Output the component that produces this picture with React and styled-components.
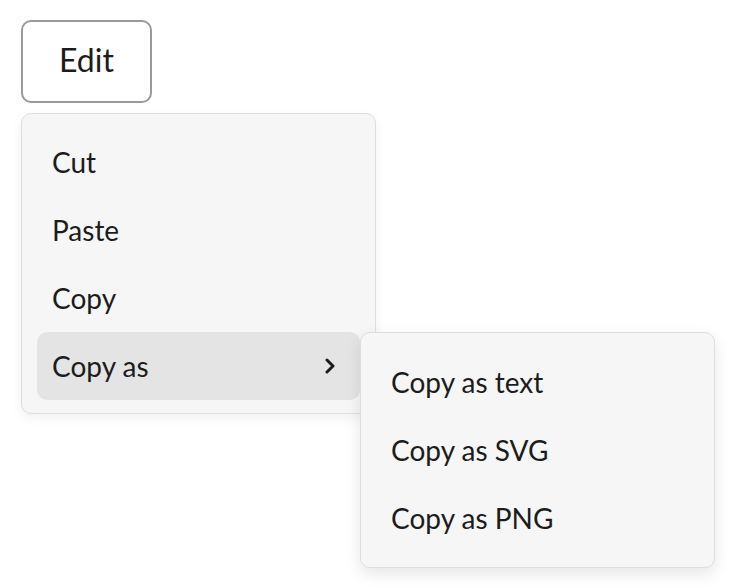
import styled, { createGlobalStyle } from "styled-components";

const GlobalStyle = createGlobalStyle`
  html, body, #root {
    min-height: 100%;
    height: 100%;
  }
  body {
    margin: 0;
    background: #fff;
    font-family: "Lato", "Open Sans", sans-serif;
    color: #1c1c1c;
  }
`;

const Page = styled.div`
  min-height: 588px;
  box-sizing: border-box;
  padding: 20px 21px;
  display: flex;
  flex-direction: column;
  align-items: flex-start;
  gap: 10px;
`;

const EditButton = styled.button`
  width: 131px;
  height: 83px;
  padding: 0 0 4px;
  border: 2px solid #9a9a9a;
  border-radius: 10px;
  background: #fff;
  font-family: inherit;
  font-size: 32px;
  color: #1c1c1c;
`;

const Menu = styled.div`
  width: 355px;
  box-sizing: border-box;
  padding: 14px 15px 13px;
  background: #f6f6f6;
  border: 1px solid #dedede;
  border-radius: 10px;
  box-shadow: 0 4px 12px rgba(0, 0, 0, 0.06);
  display: flex;
  flex-direction: column;
`;

const Item = styled.div`
  position: relative;
  height: 68px;
  flex-shrink: 0;
  display: flex;
  align-items: center;
  justify-content: space-between;
  padding: 0 24px 0 15px;
  border-radius: 10px;
  font-size: 28px;
  background: ${(p) => (p.$active ? "#e4e4e4" : "transparent")};
`;

const SubMenu = styled(Menu)`
  position: absolute;
  top: 0;
  left: 323px;
  padding: 15px 15px 15px;
  box-shadow: 0 6px 16px rgba(0, 0, 0, 0.1);
`;

const Chevron = () => (
  <svg width="12" height="16" viewBox="0 0 12 16" fill="none">
    <path d="M3 2l6 6-6 6" stroke="#1c1c1c" strokeWidth="3" strokeLinecap="round" strokeLinejoin="round" />
  </svg>
);

export default function App() {
  return (
    <>
      <GlobalStyle />
      <Page>
        <EditButton>Edit</EditButton>
        <Menu>
          <Item>Cut</Item>
          <Item>Paste</Item>
          <Item>Copy</Item>
          <Item $active>
            Copy as
            <Chevron />
            <SubMenu>
              <Item>Copy as text</Item>
              <Item>Copy as SVG</Item>
              <Item>Copy as PNG</Item>
            </SubMenu>
          </Item>
        </Menu>
      </Page>
    </>
  );
}
